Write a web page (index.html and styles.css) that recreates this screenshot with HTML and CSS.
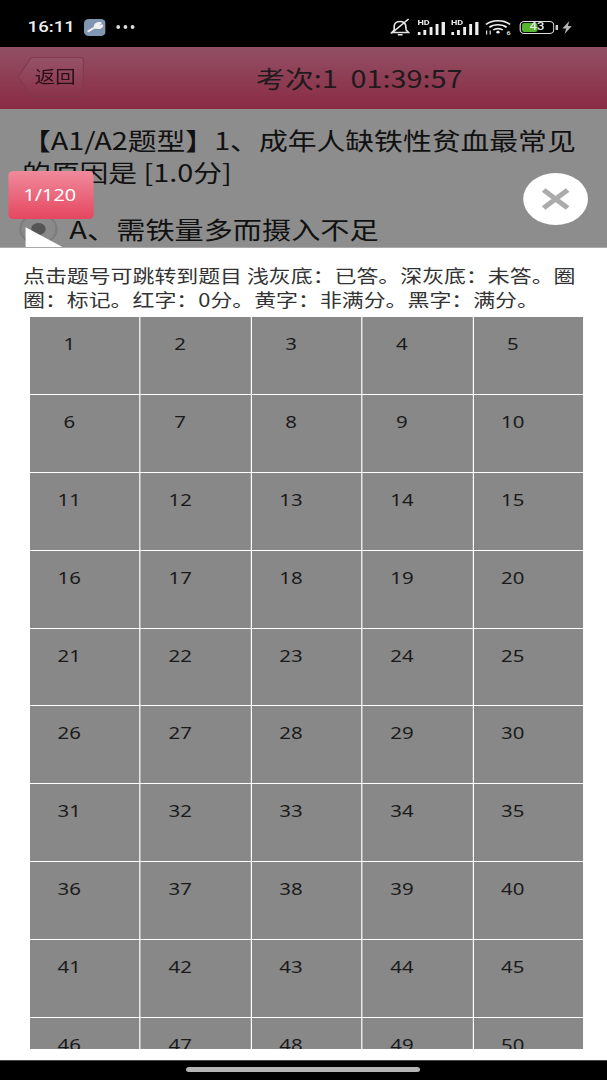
FILE: index.html
```html
<!DOCTYPE html>
<html lang="zh-CN">
<head>
<meta charset="utf-8">
<title>考次</title>
<link rel="stylesheet" href="styles.css">
</head>
<body>
<div class="screen">
  <div class="status">
    <div class="status-left">
      <span class="time">16:11</span>
      <svg class="wrench" viewBox="0 0 18 17" width="18" height="17"><rect width="18" height="17" rx="4" fill="#8096b2"/><path d="M3.600 12.300 L9.200 8.200 M9.200 8.200 C8.400 5.800 10.800 3.400 13.800 3.900 L11.800 6 L12.600 7.400 L15 6.200 C15 8.800 12 10 9.200 8.200" fill="#f0f0f0" stroke="#f0f0f0" stroke-width="1.800" stroke-linecap="round" stroke-linejoin="round"/></svg>
      <span class="dots"><i></i><i></i><i></i></span>
    </div>
    <div class="status-right">
      <svg class="bell" viewBox="0 0 17 18" width="17" height="18"><path d="M3.500 12 V8 C3.500 5 6 3.500 8.500 3.500 C11 3.500 12.500 5 13 7 L13.500 12 L15.500 14.500 H1.500 Z M6.500 16.800 H10.500 M1 15.500 L15.500 1" fill="none" stroke="#e4e4e4" stroke-width="1.400"/></svg>
      <span class="signal"><b>HD</b><svg viewBox="0 0 23 14" width="23" height="14"><path d="M0 11h2.400v3H0zM4.800 9h2.400v5H4.800zM10 6h2.400v8H10zM15 3h2.400v11H15zM20 1h2.800v13H20z" fill="#eee"/></svg></span>
      <span class="signal signal-two"><b>HD</b><svg viewBox="0 0 23 14" width="23" height="14"><path d="M0 11h2.400v3H0zM4.800 9h2.400v5H4.800zM10 6h2.400v8H10zM15 3h2.400v11H15zM20 1h2.800v13H20z" fill="#eee"/></svg></span>
      <svg class="wifi" viewBox="0 0 22 19" width="22" height="19"><path d="M1 5.500 C6 0.500 16 0.500 21 5.500 M3.800 8.300 C7.500 4.800 14.500 4.800 18.200 8.300 M7 11 C9.200 9.200 12.800 9.200 15 11" fill="none" stroke="#eee" stroke-width="1.600"/><circle cx="11" cy="13.200" r="1.400" fill="#eee"/><path d="M1.500 15.500 V11.500 M4.500 15.500 V11.500" stroke="#ddd" stroke-width="1"/><text x="18" y="15.800" class="wifi-six">6</text></svg>
      <span class="battery"><span class="level"></span><span class="pct">43</span></span><span class="cap"></span>
      <svg class="bolt" viewBox="0 0 9 13" width="9" height="13"><path d="M6.500 0 L0.500 7.500 H3.800 L2.500 13 L8.500 5 H5.200 Z" fill="#b5b5b5"/></svg>
    </div>
  </div>

  <div class="header">
    <span class="back">
      <svg class="back-shape" viewBox="0 0 56 40" width="56" height="40"><defs><linearGradient id="bk" x1="0" y1="0" x2="0" y2="1"><stop offset="0" stop-color="#955367"/><stop offset="1" stop-color="#8c324b"/></linearGradient></defs><path d="M12 0.500 H53 Q55.500 0.500 55.500 3 V37 Q55.500 39.500 53 39.500 H13 L1 20 Z" fill="url(#bk)" stroke="#823a4e" stroke-width="1"/></svg>
      <span class="back-text">返回</span>
    </span>
    <span class="title">考次:1&nbsp;&nbsp;01:39:57</span>
  </div>

  <div class="question">
    <p class="stem">【A1/A2题型】1、成年人缺铁性贫血最常见的原因是 [1.0分]</p>
    <div class="option"><span class="radio"></span><span>A、需铁量多而摄入不足</span></div>
    <span class="count">1/120</span>
    <span class="close"><svg viewBox="0 0 24 22" width="24" height="22"><path d="M2 2 L22 20 M22 2 L2 20" stroke="#ababab" stroke-width="4.500"/></svg></span>
    <span class="pointer"></span>
  </div>

  <div class="panel">
    <p class="legend">点击题号可跳转到题目 浅灰底：已答。深灰底：未答。圈圈：标记。红字：0分。黄字：非满分。黑字：满分。</p>
    <div class="grid-clip">
      <div class="grid">
        <div class="cell"><span>1</span></div><div class="cell"><span>2</span></div><div class="cell"><span>3</span></div><div class="cell"><span>4</span></div><div class="cell"><span>5</span></div>
        <div class="cell"><span>6</span></div><div class="cell"><span>7</span></div><div class="cell"><span>8</span></div><div class="cell"><span>9</span></div><div class="cell"><span>10</span></div>
        <div class="cell"><span>11</span></div><div class="cell"><span>12</span></div><div class="cell"><span>13</span></div><div class="cell"><span>14</span></div><div class="cell"><span>15</span></div>
        <div class="cell"><span>16</span></div><div class="cell"><span>17</span></div><div class="cell"><span>18</span></div><div class="cell"><span>19</span></div><div class="cell"><span>20</span></div>
        <div class="cell"><span>21</span></div><div class="cell"><span>22</span></div><div class="cell"><span>23</span></div><div class="cell"><span>24</span></div><div class="cell"><span>25</span></div>
        <div class="cell"><span>26</span></div><div class="cell"><span>27</span></div><div class="cell"><span>28</span></div><div class="cell"><span>29</span></div><div class="cell"><span>30</span></div>
        <div class="cell"><span>31</span></div><div class="cell"><span>32</span></div><div class="cell"><span>33</span></div><div class="cell"><span>34</span></div><div class="cell"><span>35</span></div>
        <div class="cell"><span>36</span></div><div class="cell"><span>37</span></div><div class="cell"><span>38</span></div><div class="cell"><span>39</span></div><div class="cell"><span>40</span></div>
        <div class="cell"><span>41</span></div><div class="cell"><span>42</span></div><div class="cell"><span>43</span></div><div class="cell"><span>44</span></div><div class="cell"><span>45</span></div>
        <div class="cell"><span>46</span></div><div class="cell"><span>47</span></div><div class="cell"><span>48</span></div><div class="cell"><span>49</span></div><div class="cell"><span>50</span></div>
      </div>
    </div>
  </div>

  <div class="navbar"><span class="home"></span></div>
</div>
</body>
</html>
```
FILE: styles.css
```css
/* The whole screen is drawn 505.83px wide and stretched 1.2x horizontally,
   as the reference's own aspect is. All x-values below are in that narrow space. */
* { box-sizing: border-box; }
html, body { margin: 0; padding: 0; background: #000; overflow: hidden; }
body { font-family: "Noto Sans CJK SC", "Noto Sans", sans-serif; }
.screen { width: 505.83px; height: 1080px; display: flex; flex-direction: column; overflow: hidden; transform: scaleX(1.2); transform-origin: left top; }

.status { height: 47px; flex: none; background: #000; display: flex; justify-content: space-between; align-items: center; padding: 7px 29px 0 23px; color: #eee; }
.status-left { display: flex; align-items: center; }
.time { font: 500 15.5px/20px "Roboto", sans-serif; color: #eee; }
.wrench { display: block; margin-left: 8px; }
.dots { display: flex; gap: 3px; margin-left: 8.5px; }
.dots i { width: 3px; height: 3.5px; border-radius: 50%; background: #ddd; }
.status-right { display: flex; align-items: center; }
.signal { position: relative; display: block; width: 23px; height: 15px; margin-left: 5.5px; }
.signal-two { margin-left: 5px; }
.signal svg { display: block; margin-top: 1px; }
.signal b { position: absolute; left: 0; top: -1px; font: 700 7.5px/8px "Roboto", sans-serif; color: #eee; }
.wifi { display: block; margin: 3px 0 0 5.5px; }
.wifi-six { font: 700 6px "Roboto", sans-serif; fill: #ddd; }
.battery { position: relative; width: 28.5px; height: 13px; margin-left: 7px; border: 1.4px solid #ddd; border-radius: 4px; display: block; overflow: hidden; }
.level { position: absolute; left: 1px; top: 1px; bottom: 1px; width: 13px; background: #55b52c; border-radius: 2px; }
.pct { position: absolute; left: 0; right: 0; top: -1px; text-align: center; font: 500 11px/12px "Roboto", sans-serif; color: #e4e4e4; }
.cap { width: 1.5px; height: 5px; background: #ccc; margin-left: 1.5px; }
.bolt { display: block; margin-left: 3px; }

.header { position: relative; height: 62px; flex: none; background: linear-gradient(#925064, #8a2b44); display: flex; align-items: center; justify-content: center; padding-left: 93px; }
.back { position: absolute; left: 13.5px; top: 10px; width: 56px; height: 40px; }
.back-shape { position: absolute; left: 0; top: 0; display: block; }
.back-text { position: absolute; left: 15.5px; top: 0; font-size: 17px; line-height: 38px; color: #2a1016; }
.title { font-size: 24px; color: #1f1a1b; line-height: 30px; }

.question { position: relative; height: 138px; flex: none; background: #8d8d8d; padding: 15px 23px 0 18.3px; color: #111; overflow: hidden; }
.stem { margin: 0; font-size: 24px; line-height: 32px; width: 465px; }
.option { display: flex; align-items: center; gap: 10px; font-size: 24.3px; line-height: 32px; margin-top: 25px; margin-left: -2.5px; }
.radio { width: 32px; height: 32px; flex: none; border-radius: 50%; border: 2px solid #7d7d7d; background: radial-gradient(circle, #555 0 5.5px, #8a8a8a 6.5px); }
.count { position: absolute; left: 6.7px; top: 62px; width: 71px; height: 48px; padding-right: 1.5px; border-radius: 4px; background: linear-gradient(#f08a9c, #e5475f); color: #fff; font: 400 16.5px/48px "Noto Sans", sans-serif; text-align: center; }
.close { position: absolute; left: 436px; top: 64px; width: 54px; height: 52px; border-radius: 50%; background: #fff; display: flex; align-items: center; justify-content: center; }
.pointer { position: absolute; left: 21px; top: 118px; width: 31px; height: 20px; background: #fff; clip-path: polygon(0 0, 100% 100%, 0 100%); }

.panel { flex: 1; min-height: 0; background: #fff; border-top: 1px solid #aaa; display: flex; flex-direction: column; padding: 15px 20px 11px 19.2px; }
.legend { margin: 0 0 6px; font-size: 18.25px; line-height: 24px; color: #333; width: 470px; }
.grid-clip { flex: 1; min-height: 0; overflow: hidden; margin-left: 5.8px; }
.grid { display: grid; grid-template-columns: repeat(5, 1fr); grid-auto-rows: 76.9px; gap: 1px; width: 461px; }
.cell { background: #888; padding-top: 14px; color: #1a1a1a; font: 400 17px/25px "Noto Sans", sans-serif; }
.cell span { display: block; width: 65.5px; text-align: center; }

.navbar { height: 20px; flex: none; background: #000; border-top: 1px solid #444; display: flex; justify-content: center; padding-top: 6px; }
.home { width: 195px; height: 4.5px; border-radius: 3px; background: #b5b5b5; }
```
